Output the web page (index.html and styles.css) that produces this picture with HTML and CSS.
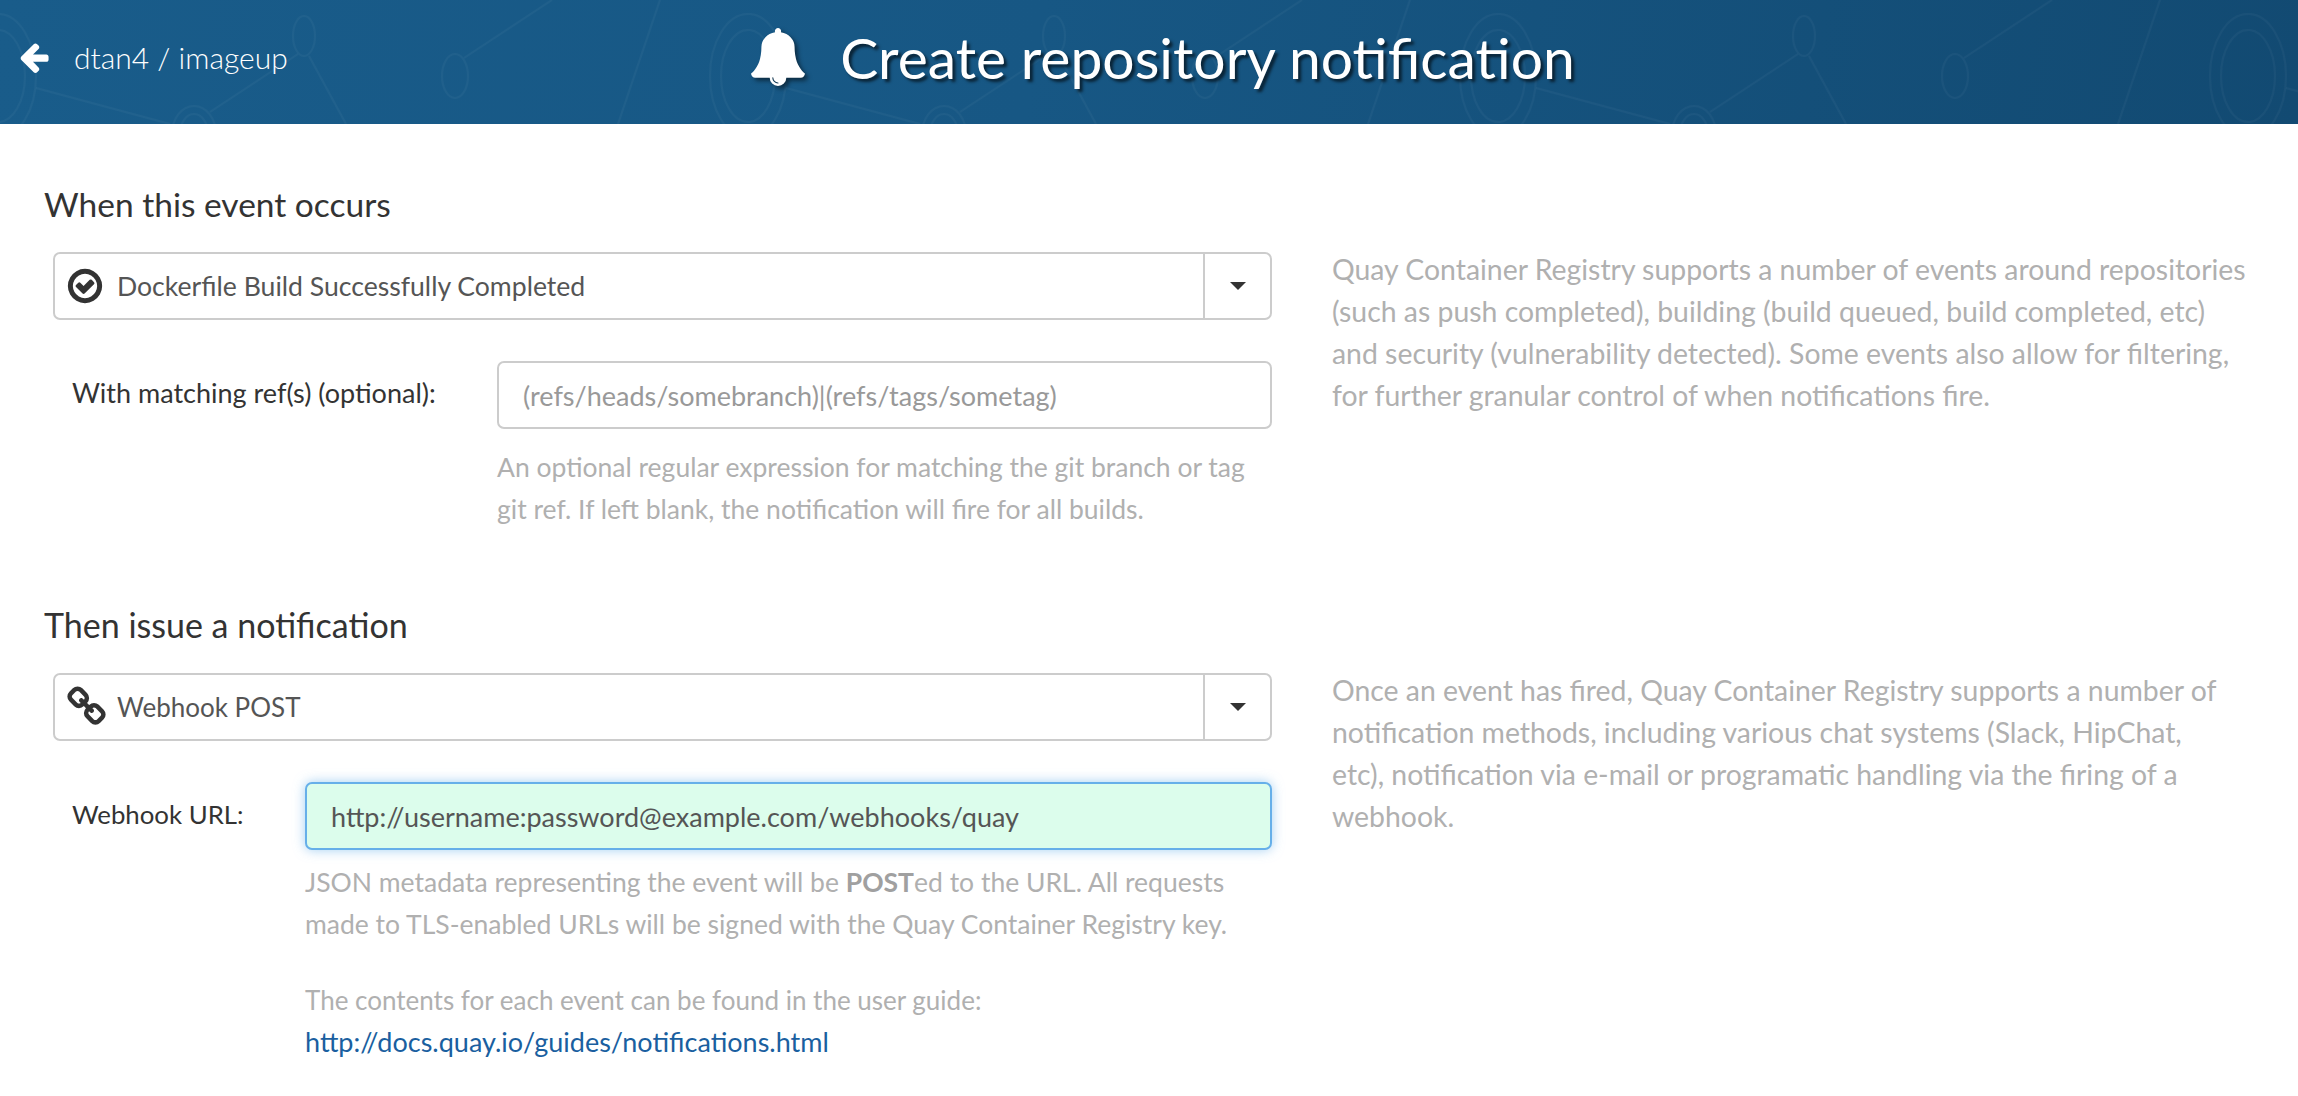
FILE: index.html
```html
<!DOCTYPE html>
<html lang="en">
<head>
    <meta charset="UTF-8">
    <title>Create repository notification</title>
    <link rel="stylesheet" href="styles.css">
</head>
<body>
    <header class="page-header">
        <svg class="header-pattern" width="100%" height="100%">
            <defs>
                <pattern id="net" width="750" height="124" patternUnits="userSpaceOnUse">
                    <g fill="none" stroke="#fff" stroke-opacity="0.035" stroke-width="2">
                        <ellipse cx="304" cy="36" rx="11" ry="20"/>
                        <ellipse cx="455" cy="76" rx="13" ry="22"/>
                        <ellipse cx="194" cy="134" rx="22" ry="28"/>
                        <ellipse cx="194" cy="134" rx="14" ry="20"/>
                        <ellipse cx="-2" cy="76" rx="38" ry="62"/>
                        <ellipse cx="-2" cy="76" rx="27" ry="46"/>
                        <ellipse cx="748" cy="76" rx="38" ry="62"/>
                        <ellipse cx="748" cy="76" rx="27" ry="46"/>
                        <path d="M298 54 210 112M309 56 346 124M464 58 552 0M660 0 618 124M36 88 170 124"/>
                    </g>
                </pattern>
            </defs>
            <rect width="100%" height="100%" fill="url(#net)"/>
        </svg>
        <a class="back-link" href="#">
            <svg class="back-icon" viewBox="0 0 1792 1792"><path d="M1664 896v128q0 53-32.5 90.5t-84.5 37.5h-704l293 294q38 36 38 90t-38 90l-75 76q-37 37-90 37-52 0-90-37l-651-652q-37-37-37-90 0-52 37-91l651-650q38-38 90-38 52 0 90 38l75 74q38 38 38 91t-38 91l-293 293h704q52 0 84.5 37.5t32.5 90.5z"/></svg>
            <span>dtan4 / imageup</span>
        </a>
        <h1 class="page-title">
            <svg class="bell-icon" viewBox="0 0 1792 1792"><path d="M912 1696q0-16-16-16-59 0-101.5-42.5t-42.5-101.5q0-16-16-16t-16 16q0 73 51.5 124.5t124.5 51.5q16 0 16-16zm816-288q0 52-38 90t-90 38h-448q0 106-75 181t-181 75-181-75-75-181h-448q-52 0-90-38t-38-90q50-42 91-88t85-119.5 74.5-158.5 50-206 19.5-260q0-152 117-282.5t307-158.5q-8-19-8-39 0-40 28-68t68-28 68 28 28 68q0 20-8 39 190 28 307 158.5t117 282.5q0 139 19.5 260t50 206 74.5 158.5 85 119.5 91 88z"/></svg>
            <span>Create repository notification</span>
        </h1>
    </header>

    <main class="content">
        <section class="step step-event">
            <div class="step-form">
                <h3>When this event occurs</h3>
                <div class="dropdown">
                    <div class="dropdown-value">
                        <svg class="option-icon check" viewBox="0 0 1792 1792"><path d="M1299 813l-422 422q-19 19-45 19t-45-19l-294-294q-19-19-19-45t19-45l102-102q19-19 45-19t45 19l147 147 275-275q19-19 45-19t45 19l102 102q19 19 19 45t-19 45zm141 83q0-148-73-273t-198-198-273-73-273 73-198 198-73 273 73 273 198 198 273 73 273-73 198-198 73-273zm224 0q0 209-103 385.5t-279.5 279.5-385.5 103-385.5-103-279.5-279.5-103-385.5 103-385.5 279.5-279.5 385.5-103 385.5 103 279.5 279.5 103 385.5z"/></svg>
                        <span>Dockerfile Build Successfully Completed</span>
                    </div>
                    <div class="dropdown-toggle"><span class="caret"></span></div>
                </div>
                <div class="field field-ref">
                    <label>With matching ref(s) (optional):</label>
                    <div class="field-body">
                        <input class="text-input" type="text" placeholder="(refs/heads/somebranch)|(refs/tags/sometag)">
                        <p class="help">An optional regular expression for matching the git branch or tag<br>git ref. If left blank, the notification will fire for all builds.</p>
                    </div>
                </div>
            </div>
            <p class="side-note">Quay Container Registry supports a number of events around repositories<br>(such as push completed), building (build queued, build completed, etc)<br>and security (vulnerability detected). Some events also allow for filtering,<br>for further granular control of when notifications fire.</p>
        </section>

        <section class="step step-method">
            <div class="step-form">
                <h3>Then issue a notification</h3>
                <div class="dropdown">
                    <div class="dropdown-value">
                        <svg class="option-icon link" viewBox="0 0 1792 1792"><path d="M1456 1216q0-40-28-68l-208-208q-28-28-68-28-42 0-72 32 3 3 19 18.5t21.5 21.5 15 19 13 25.5 3.5 27.5q0 40-28 68t-68 28q-15 0-27.5-3.5t-25.5-13-19-15-21.5-21.5-18.5-19q-33 31-33 73 0 40 28 68l206 207q27 27 68 27 40 0 68-26l147-146q28-28 28-67zm-703-705q0-40-28-68l-206-207q-28-28-68-28-39 0-68 27l-147 146q-28 28-28 67 0 40 28 68l208 208q27 27 68 27 42 0 72-31-3-3-19-18.5t-21.5-21.5-15-19-13-25.5-3.5-27.5q0-40 28-68t68-28q15 0 27.5 3.5t25.5 13 19 15 21.5 21.5 18.5 19q33-31 33-73zm895 705q0 120-85 203l-147 146q-83 83-203 83-121 0-204-85l-206-207q-83-83-83-203 0-123 88-209l-88-88q-86 88-208 88-120 0-204-84l-208-208q-84-84-84-204t85-203l147-146q83-83 203-83 121 0 204 85l206 207q83 83 83 203 0 123-88 209l88 88q86-88 208-88 120 0 204 84l208 208q84 84 84 204z"/></svg>
                        <span>Webhook POST</span>
                    </div>
                    <div class="dropdown-toggle"><span class="caret"></span></div>
                </div>
                <div class="field field-url">
                    <label>Webhook URL:</label>
                    <div class="field-body">
                        <input class="text-input focused" type="text" value="http://username:password@example.com/webhooks/quay">
                        <p class="help help-tight">JSON metadata representing the event will be <strong>POST</strong>ed to the URL. All requests<br>made to TLS-enabled URLs will be signed with the Quay Container Registry key.</p>
                        <p class="help help-gap">The contents for each event can be found in the user guide:<br><a href="#">http://docs.quay.io/guides/notifications.html</a></p>
                    </div>
                </div>
            </div>
            <p class="side-note">Once an event has fired, Quay Container Registry supports a number of<br>notification methods, including various chat systems (Slack, HipChat,<br>etc), notification via e-mail or programatic handling via the firing of a<br>webhook.</p>
        </section>
    </main>
</body>
</html>
```

FILE: styles.css
```css
html, body {
    height: 1096px;
    overflow: hidden;
}
body {
    margin: 0;
    background: #fff;
    color: #333;
    font-family: Lato, "Noto Sans", sans-serif;
    font-size: 26.6px;
    line-height: 42px;
}

/* header */
.page-header {
    position: relative;
    height: 124px;
    display: flex;
    align-items: center;
    justify-content: center;
    background: linear-gradient(100deg, #195c8a 0%, #175784 45%, #124a72 100%);
    color: #fff;
}
.header-pattern {
    position: absolute;
    left: 0;
    top: 0;
}
.back-link {
    position: absolute;
    left: 17px;
    top: 36px;
    display: flex;
    align-items: center;
    gap: 23px;
    color: #fff;
    text-decoration: none;
    font-size: 30px;
    font-weight: 300;
}
.back-icon {
    width: 34px;
    height: 34px;
    fill: #fff;
}
.page-title {
    position: relative;
    display: flex;
    align-items: center;
    gap: 33px;
    margin: -10px 0 0 26px;
    font-size: 57px;
    font-weight: 400;
    line-height: 70px;
    text-shadow: 3px 3px 3px rgba(0, 0, 0, 0.6);
}
.bell-icon {
    width: 58px;
    height: 58px;
    fill: #fff;
    filter: drop-shadow(3px 3px 2px rgba(0, 0, 0, 0.5));
}

/* sections */
.step {
    display: flex;
    gap: 60px;
}
.step-event {
    padding-top: 60px;
    height: 421px;
}
.step-form {
    width: 1228px;
    padding-left: 44px;
}
.step h3 {
    margin: 0 0 28px;
    font-size: 33.5px;
    font-weight: 400;
    line-height: 40px;
    color: #333;
}
.step-method h3 {
    font-size: 34px;
}
.side-note {
    margin: 64px 0 0;
    color: #b0b0b0;
    font-size: 28.4px;
    white-space: nowrap;
}

/* select box */
.dropdown {
    display: flex;
    height: 68px;
    margin-left: 9px;
    box-sizing: border-box;
    border: 2px solid #ccc;
    border-radius: 7px;
}
.dropdown-value {
    flex: 1;
    display: flex;
    align-items: center;
    gap: 12px;
    padding-left: 10px;
    color: #555;
}
.step-method .dropdown-value {
    font-size: 26px;
}
.dropdown-toggle {
    width: 65px;
    display: flex;
    align-items: center;
    justify-content: center;
    border-left: 2px solid #ccc;
}
.caret {
    border-top: 8px solid #333;
    border-left: 8px solid transparent;
    border-right: 8px solid transparent;
}
.option-icon {
    fill: #333;
    flex: none;
}
.option-icon.check {
    width: 40px;
    height: 40px;
}
.option-icon.link {
    width: 42px;
    height: 42px;
    margin: 0 -4px 0 2px;
}

/* fields */
.field {
    display: flex;
    margin: 41px 0 0 28px;
}
.field label {
    flex: none;
    padding-top: 11px;
    color: #333;
    font-size: 27px;
    white-space: nowrap;
}
.field-ref label {
    width: 425px;
}
.field-url label {
    width: 233px;
    font-size: 25.8px;
}
.field-body {
    flex: 1;
}
.text-input {
    display: block;
    width: 100%;
    height: 68px;
    box-sizing: border-box;
    padding: 0 24px;
    border: 2px solid #ccc;
    border-radius: 7px;
    background: #fff;
    color: #555;
    font: inherit;
    font-size: 27px;
    outline: none;
}
.text-input::placeholder {
    color: #999;
}
.text-input.focused {
    background: #dcfdec;
    border-color: #66afe9;
    box-shadow: 0 0 12px rgba(102, 175, 233, 0.6);
}
.help {
    margin: 17px 0 0;
    color: #b0b0b0;
    font-size: 26.5px;
    white-space: nowrap;
}
.help-tight {
    margin-top: 11px;
}
.help-gap {
    margin-top: 34px;
    font-size: 26px;
}
.help strong {
    font-weight: 700;
    color: #a0a0a0;
}
.help a {
    color: #1a5fa0;
    font-size: 27px;
    text-decoration: none;
}
```
